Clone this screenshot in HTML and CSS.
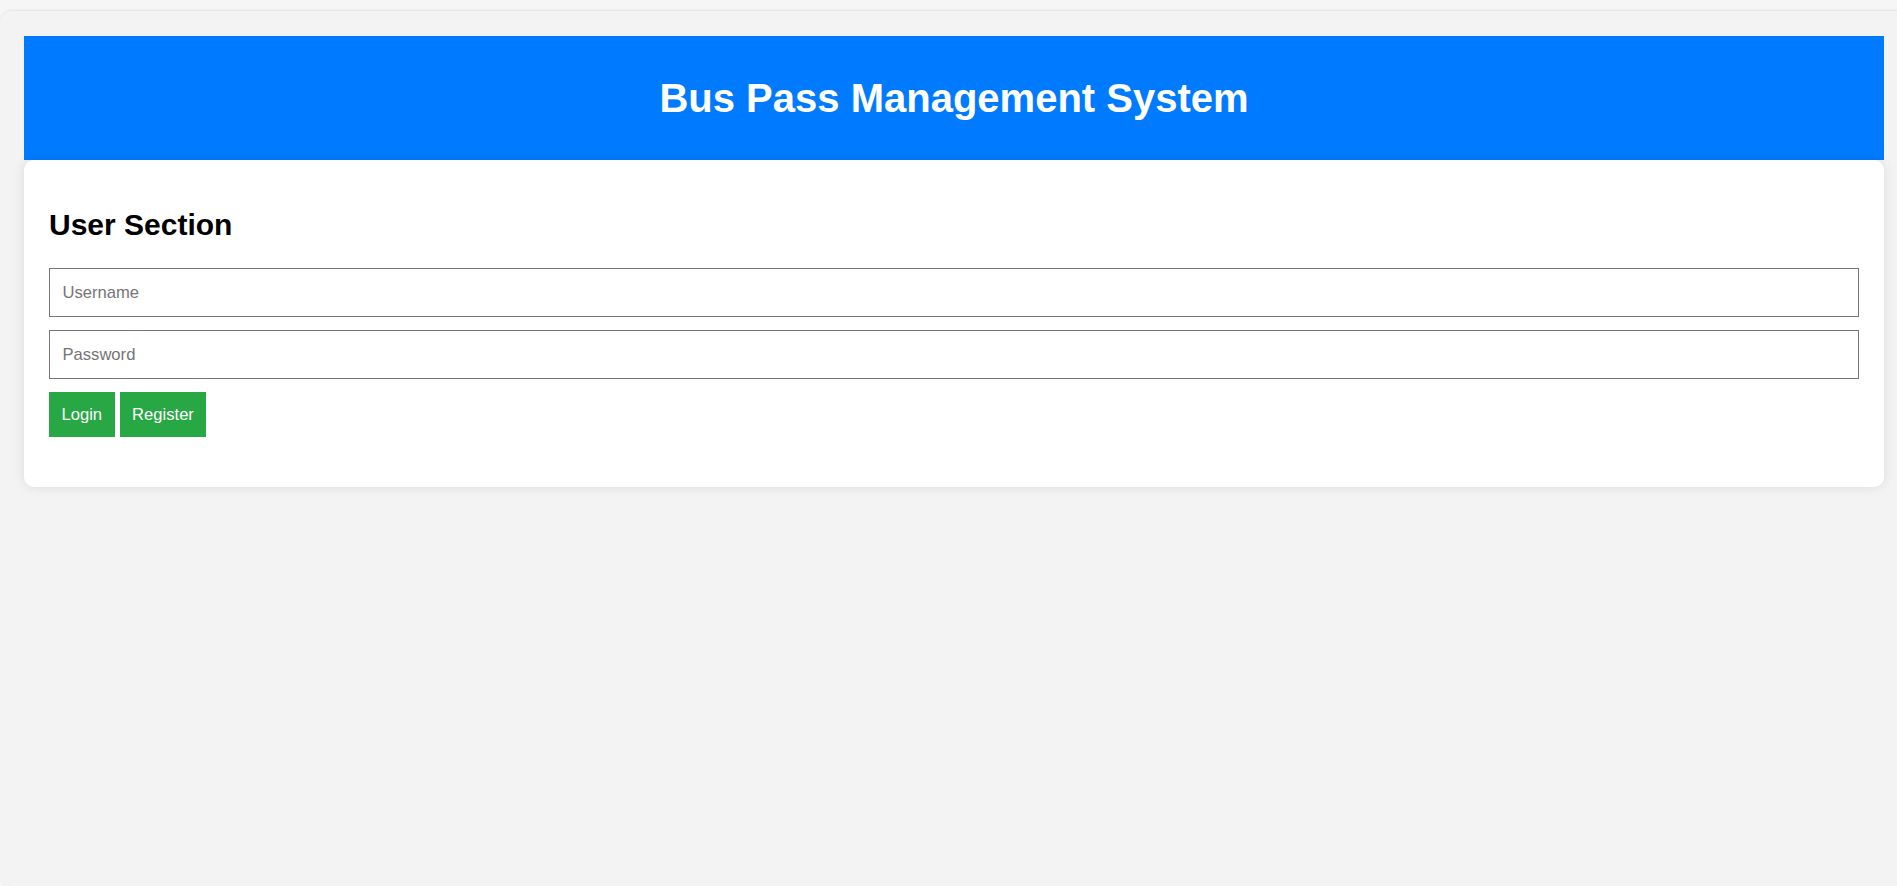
FILE: index.html
```html
<!DOCTYPE html>
<html lang="en">
<head>
<meta charset="utf-8">
<title>Bus Pass Management System</title>
<link rel="stylesheet" href="styles.css">
</head>
<body>
<div class="frame">
  <header class="header">
    <h1 class="title">Bus Pass Management System</h1>
  </header>
  <section class="card">
    <h2 class="section-title">User Section</h2>
    <input class="field" type="text" placeholder="Username">
    <input class="field" type="password" placeholder="Password">
    <div class="actions">
      <button class="btn">Login</button>
      <button class="btn">Register</button>
    </div>
  </section>
</div>
</body>
</html>
```

FILE: styles.css
```css
html, body {
  margin: 0;
  padding: 0;
  height: 100%;
  overflow: hidden;
}
body {
  background: #f6f6f6;
  font-family: "Liberation Sans", Arial, sans-serif;
  padding-top: 10px;
  box-sizing: border-box;
}
.frame {
  width: calc(100% + 40px);
  height: 100%;
  box-sizing: border-box;
  background: #f3f3f3;
  border-radius: 12px;
  border-top: 1px solid #e8e8e8;
  box-shadow: 0 0 3px rgba(0,0,0,0.06);
  padding: 25px 53px 0 24px;
}
.header {
  background: #007bff;
  height: 124px;
  display: flex;
  align-items: center;
  justify-content: center;
}
.title {
  margin: 0;
  color: #fff;
  font-size: 40px;
  font-weight: bold;
  line-height: 46px;
}
.card {
  background: #fff;
  border-radius: 10px;
  box-shadow: 0 0 12px rgba(0,0,0,0.1);
  padding: 47px 25px 50px 25px;
  display: flex;
  flex-direction: column;
}
.section-title {
  margin: 0 0 26px 0;
  font-size: 30px;
  font-weight: bold;
  line-height: 35px;
  color: #000;
}
.field {
  display: block;
  box-sizing: border-box;
  width: 100%;
  height: 49px;
  margin: 0 0 13px 0;
  padding: 0 12.5px;
  border: 1.25px solid #767676;
  border-radius: 0;
  font-family: "Liberation Sans", Arial, sans-serif;
  font-size: 16.6px;
  color: #000;
  background: #fff;
}
.field::placeholder {
  color: #757575;
}
.actions {
  display: flex;
  gap: 5px;
}
.btn {
  background: #28a745;
  color: #fff;
  border: none;
  border-radius: 0;
  height: 45px;
  padding: 0 12.5px;
  font-family: "Liberation Sans", Arial, sans-serif;
  font-size: 16.6px;
  cursor: pointer;
}
```
